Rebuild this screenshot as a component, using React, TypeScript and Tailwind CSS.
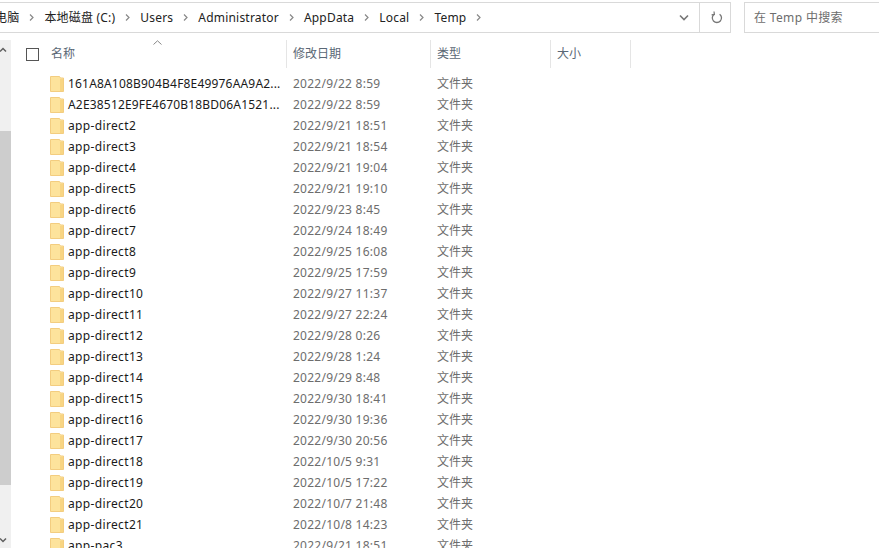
import React from 'react';

const folders: [string, string][] = [
  ['161A8A108B904B4F8E49976AA9A2...', '2022/9/22 8:59'],
  ['A2E38512E9FE4670B18BD06A1521...', '2022/9/22 8:59'],
  ['app-direct2', '2022/9/21 18:51'],
  ['app-direct3', '2022/9/21 18:54'],
  ['app-direct4', '2022/9/21 19:04'],
  ['app-direct5', '2022/9/21 19:10'],
  ['app-direct6', '2022/9/23 8:45'],
  ['app-direct7', '2022/9/24 18:49'],
  ['app-direct8', '2022/9/25 16:08'],
  ['app-direct9', '2022/9/25 17:59'],
  ['app-direct10', '2022/9/27 11:37'],
  ['app-direct11', '2022/9/27 22:24'],
  ['app-direct12', '2022/9/28 0:26'],
  ['app-direct13', '2022/9/28 1:24'],
  ['app-direct14', '2022/9/29 8:48'],
  ['app-direct15', '2022/9/30 18:41'],
  ['app-direct16', '2022/9/30 19:36'],
  ['app-direct17', '2022/9/30 20:56'],
  ['app-direct18', '2022/10/5 9:31'],
  ['app-direct19', '2022/10/5 17:22'],
  ['app-direct20', '2022/10/7 21:48'],
  ['app-direct21', '2022/10/8 14:23'],
  ['app-pac3', '2022/9/21 18:51'],
];

const crumbs = ['本地磁盘 (C:)', 'Users', 'Administrator', 'AppData', 'Local', 'Temp'];

const Sep = () => (
  <svg width="5" height="7" viewBox="0 0 5 7" className="mx-[10px] shrink-0">
    <path d="M1 .5 4 3.5 1 6.5" fill="none" stroke="#888" strokeWidth="1.2" />
  </svg>
);

const Folder = () => (
  <svg width="14" height="16" viewBox="0 0 14 16" className="shrink-0">
    <path d="M.5.5H9.5L10.5 2H13.5V15.5H.5Z" fill="#fde39c" stroke="#f3cd80" />
    <path d="M10 3V15H13V3Z" fill="#f8d583" />
  </svg>
);

const App = () => {
  return (
    <div className="w-[879px] h-[556px] overflow-hidden bg-white text-[12px] font-['Noto_Sans','Noto_Sans_CJK_SC',sans-serif]">
      {/* address bar + search */}
      <div className="flex h-[40px] pt-[2px]">
        <div className="flex items-center w-[732px] h-[31px] ml-[-1px] border border-[#d9d9d9] text-[#222]">
          <div className="flex items-center flex-1 overflow-hidden tracking-[0.2px]">
            <span className="ml-[-5px]">电脑</span>
            <Sep />
            {crumbs.map((c) => (
              <React.Fragment key={c}>
                <span className="whitespace-nowrap">{c}</span>
                <Sep />
              </React.Fragment>
            ))}
          </div>
          <div className="w-[31px] flex justify-center pl-[1px]">
            <svg width="10" height="7" viewBox="0 0 10 7">
              <path d="M1 1.5 5 5.5 9 1.5" fill="none" stroke="#777" strokeWidth="1.6" />
            </svg>
          </div>
          <div className="w-[31px] h-full flex items-center justify-center border-l border-[#d9d9d9] pl-[3px]">
            <svg width="12" height="13" viewBox="0 0 12 13">
              <path d="M8.6 3.2A4.6 4.6 0 1 1 3.2 3.2" fill="none" stroke="#777" strokeWidth="1.3" />
              <path d="M3 .5 3.4 3.4 .6 3.8" fill="none" stroke="#777" strokeWidth="1.2" />
            </svg>
          </div>
        </div>
        <div className="ml-[13px] flex-1 h-[31px] border border-r-0 border-[#d9d9d9] flex items-center pl-[9px] text-[#6d6d6d] tracking-[0.35px]">
          在 Temp 中搜索
        </div>
      </div>

      <div className="flex h-[508px]">
        {/* scrollbar */}
        <div className="w-[11px] bg-[#f0f0f0] shrink-0 flex flex-col">
          <div className="h-[91px] flex pt-[7px] ml-[-1px]">
            <svg width="8" height="6" viewBox="0 0 8 6">
              <path d="M1 4.5 4 1.5 7 4.5" fill="none" stroke="#606060" strokeWidth="1.5" />
            </svg>
          </div>
          <div className="h-[354px] bg-[#cdcdcd]" />
          <div className="flex-1 flex items-end pb-[5px] ml-[-1px]">
            <svg width="8" height="6" viewBox="0 0 8 6">
              <path d="M1 1.5 4 4.5 7 1.5" fill="none" stroke="#606060" strokeWidth="1.5" />
            </svg>
          </div>
        </div>

        <div className="flex-1 overflow-hidden">
          {/* column header */}
          <div className="relative flex h-[28px] text-[#5a6775]">
            <div className="flex items-center w-[276px] border-r border-[#e5e5e5] pl-[15px]">
              <span className="w-[13px] h-[13px] border border-[#555] mr-[12px]" />
              <span>名称</span>
              <svg width="9" height="5" viewBox="0 0 9 5" className="absolute left-[142px] top-0">
                <path d="M.5 4.5 4.5 .8 8.5 4.5" fill="none" stroke="#888" />
              </svg>
            </div>
            <div className="flex items-center w-[144px] border-r border-[#e5e5e5] pl-[6px]">修改日期</div>
            <div className="flex items-center w-[120px] border-r border-[#e5e5e5] pl-[6px]">类型</div>
            <div className="flex items-center w-[80px] border-r border-[#e5e5e5] pl-[6px]">大小</div>
          </div>

          {/* file rows */}
          <div className="pt-[5px]">
            {folders.map(([name, date]) => (
              <div key={name} className="flex items-center h-[21px]">
                <div className="flex items-center w-[276px] pl-[39px] text-[#1a1a1a]">
                  <Folder />
                  <span className={name.endsWith('...') ? 'ml-[4px] whitespace-nowrap tracking-[0.18px]' : 'ml-[4px] whitespace-nowrap tracking-[0.35px]'}>{name}</span>
                </div>
                <div className="w-[144px] pl-[6px] text-[#6d6d6d] tracking-[0.25px]">{date}</div>
                <div className="pl-[6px] text-[#6d6d6d]">文件夹</div>
              </div>
            ))}
          </div>
        </div>
      </div>
    </div>
  );
};

export default App;
